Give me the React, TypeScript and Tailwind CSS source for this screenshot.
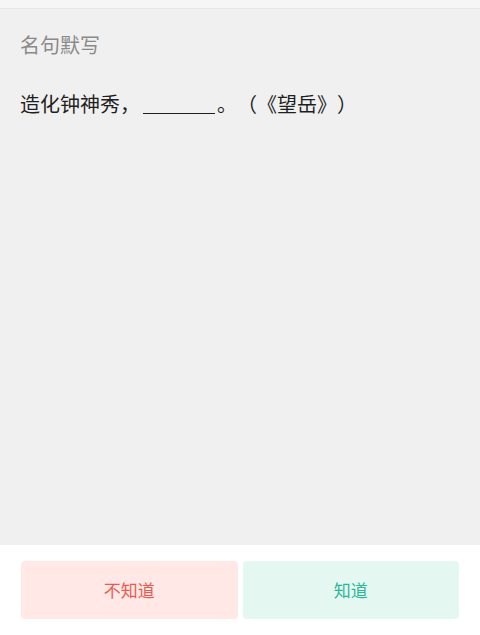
export default function App() {
  return (
    <div className="flex h-[635px] w-full flex-col bg-[#f0f0f0] font-['Noto_Sans_CJK_SC',sans-serif] [text-spacing-trim:space-all]">
      <div className="h-[9px] border-b border-[#e6e6e6] bg-[#f6f6f6]" />

      <div className="flex-1 px-5">
        <h2 className="mt-[23px] text-[20px] leading-[26px] text-[#8a8a8a]">名句默写</h2>
        <p className="mt-[32px] text-[20px] leading-[28px] text-[#1f1f1f]">
          造化钟神秀，
          <span className="ml-[3px] mr-[2px] inline-block w-[72px] translate-y-[2px] border-b-[1.5px] border-[#1f1f1f] align-baseline" />
          。（《望岳》）
        </p>
      </div>

      <div className="flex h-[90px] gap-[5px] bg-white px-[21px] pt-[16px]">
        <button className="flex h-[58px] flex-1 items-center justify-center rounded-[4px] bg-[#ffe8e6] text-[17px] text-[#ea5a4f]">
          不知道
        </button>
        <button className="flex h-[58px] flex-1 items-center justify-center rounded-[4px] bg-[#e4f7f1] text-[17px] text-[#2db799]">
          知道
        </button>
      </div>
    </div>
  );
}
